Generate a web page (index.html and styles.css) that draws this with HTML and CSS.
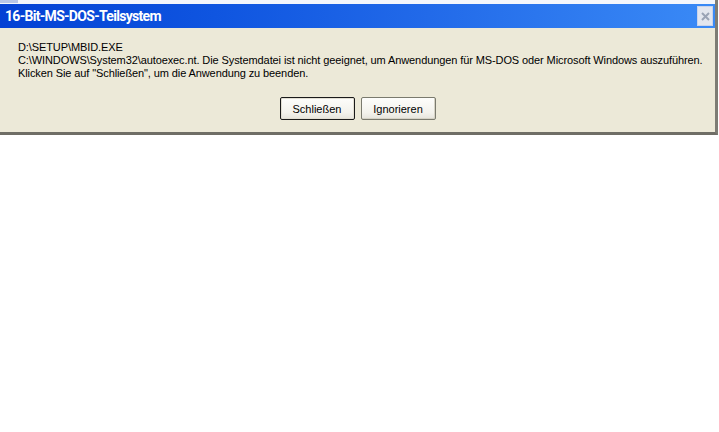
FILE: index.html
```html
<!DOCTYPE html>
<html lang="de">
<head>
<meta charset="utf-8">
<title>16-Bit-MS-DOS-Teilsystem</title>
<link rel="stylesheet" href="styles.css">
</head>
<body>
<div class="window">
  <div class="topstrip"><span class="tab"></span></div>
  <div class="titlebar">
    <span class="title">16-Bit-MS-DOS-Teilsystem</span>
    <span class="close">
      <svg width="9" height="9" viewBox="0 0 9 9"><path d="M1 1 L8 8 M8 1 L1 8" stroke="#9aa3b5" stroke-width="2"/></svg>
    </span>
  </div>
  <div class="body">
    <div class="message">
      <p>D:\SETUP\MBID.EXE</p>
      <p>C:\WINDOWS\System32\autoexec.nt. Die Systemdatei ist nicht geeignet, um Anwendungen für MS-DOS oder Microsoft Windows auszuführen.</p>
      <p>Klicken Sie auf "Schließen", um die Anwendung zu beenden.</p>
    </div>
    <div class="buttons">
      <button class="btn default">Schließen</button>
      <button class="btn">Ignorieren</button>
    </div>
  </div>
</div>
</body>
</html>
```
FILE: styles.css
```css
html, body {
  margin: 0;
  padding: 0;
  background: #ffffff;
}
body {
  font-family: "Liberation Sans", Arial, sans-serif;
}
.window {
  width: 715px;
  border-right: 3px solid #7d7c74;
  border-bottom: 3px solid #6f6e66;
  box-sizing: content-box;
}
.topstrip {
  height: 4px;
  background: #f4f6fc;
}
.topstrip .tab {
  display: block;
  width: 18px;
  height: 3px;
  background: #b8c6e8;
}
.titlebar {
  height: 24px;
  display: flex;
  align-items: center;
  justify-content: space-between;
  padding: 0 2px 0 5px;
  background: linear-gradient(to right, #0441d4 0%, #0f55e0 30%, #226ae9 60%, #3a8af6 100%);
}
.title {
  color: #ffffff;
  font-family: Roboto, "Liberation Sans", sans-serif;
  font-weight: bold;
  font-size: 14px;
  letter-spacing: -0.7px;
}
.close {
  width: 14px;
  height: 18px;
  background: #e3e6ee;
  border: 1px solid #c9d3ea;
  display: flex;
  align-items: center;
  justify-content: center;
}
.body {
  background: #ece9d8;
  padding: 13px 0 12px 0;
}
.message {
  padding-left: 18px;
}
.message p {
  margin: 0;
  font-size: 11px;
  line-height: 13px;
  letter-spacing: -0.1px;
  color: #000000;
}
.buttons {
  display: flex;
  justify-content: center;
  gap: 6px;
  margin-top: 17px;
}
.btn {
  width: 75px;
  height: 23px;
  font-family: "Liberation Sans", Arial, sans-serif;
  font-size: 11px;
  color: #000;
  background: linear-gradient(#fdfdfb, #f3f2ec 70%, #e6e4dc);
  border: 1px solid #7a7a6e;
  border-radius: 2px;
  padding: 0;
  box-shadow: inset -1px -1px 0 #d6d3c6;
}
.btn.default {
  border: 1px solid #1a1a1a;
  box-shadow: inset 0 0 0 1px #e2dfd3;
}
```
